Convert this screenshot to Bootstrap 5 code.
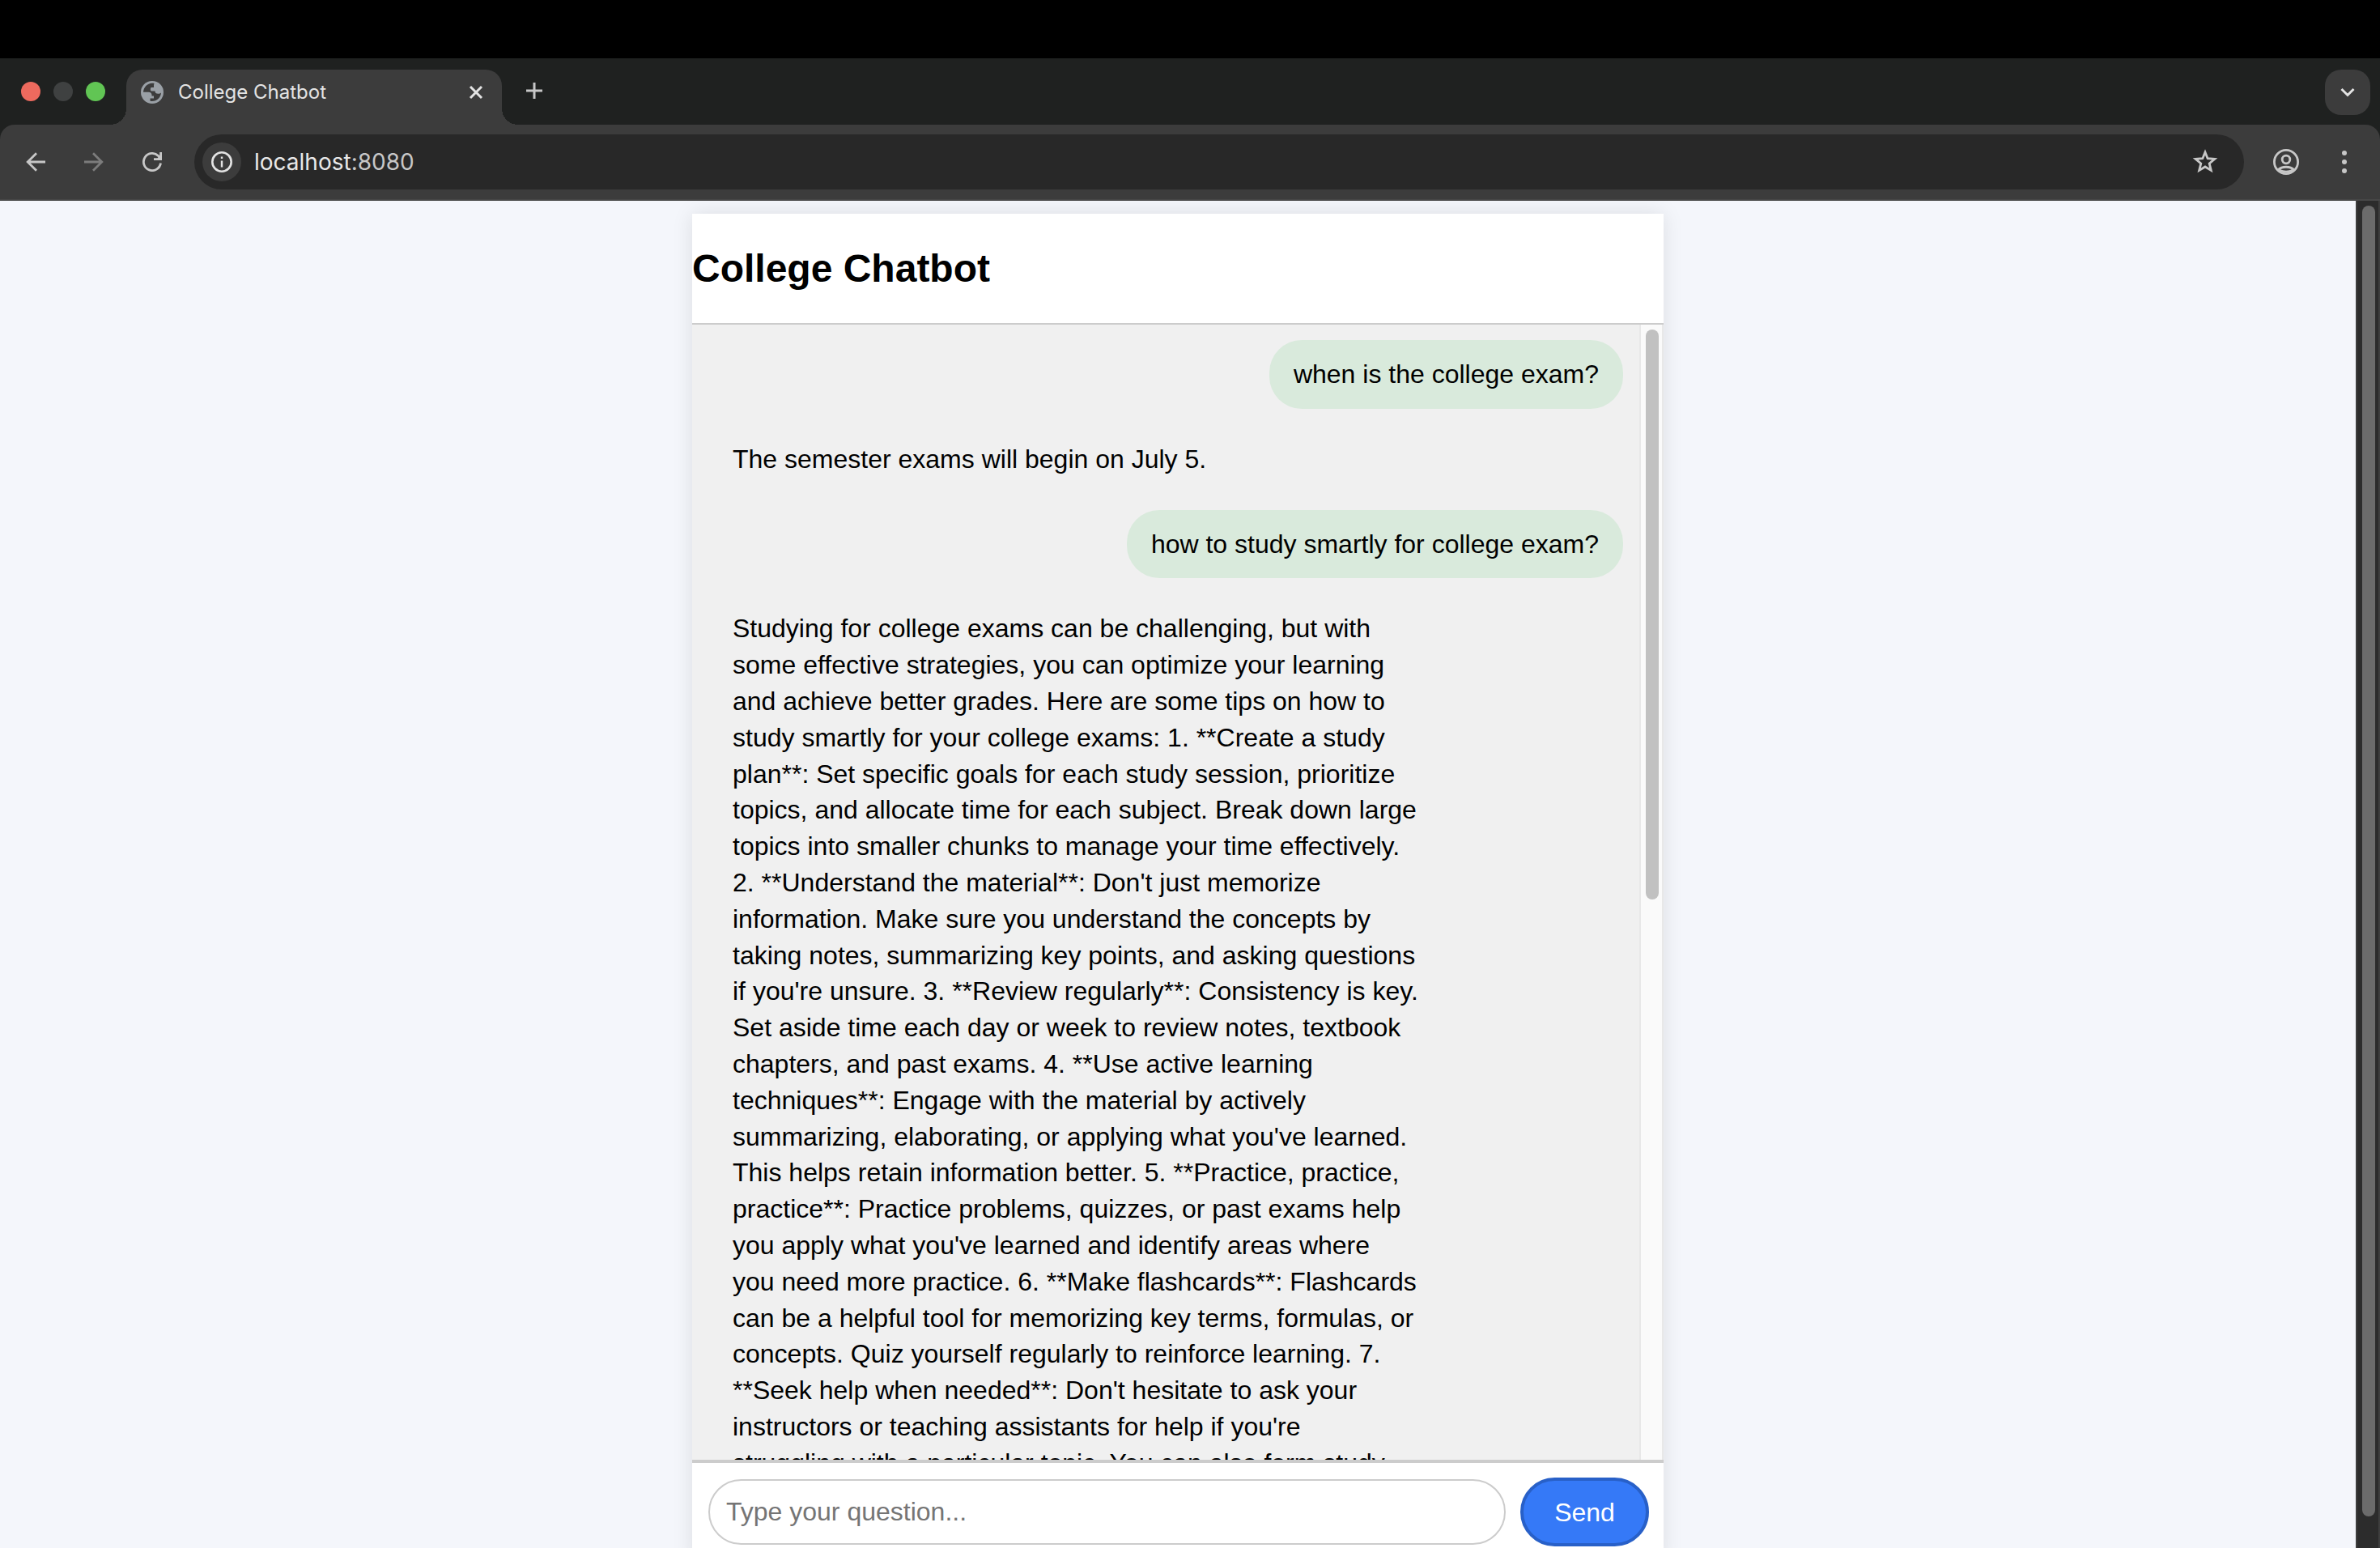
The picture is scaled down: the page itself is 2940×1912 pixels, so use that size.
<!DOCTYPE html>
<html lang="en">
<head>
<meta charset="utf-8">
<meta name="viewport" content="width=device-width, initial-scale=1">
<title>College Chatbot</title>
<link href="https://cdn.jsdelivr.net/npm/bootstrap@5.3.0/dist/css/bootstrap.min.css" rel="stylesheet">
<style>
body { font-family: "Liberation Sans", Arial, sans-serif; color: #000; background: #000; }
button { line-height: 1; }
.icon-btn { border: 0; padding: 0; background: transparent; color: #c7c7c7; display: flex; align-items: center; justify-content: center; flex: none; }
.icon-btn svg, .site-tab svg { display: block; }

/* browser chrome */
.menu-strip { height: 72px; background: #000; }
.tab-strip { height: 82px; background: #1f2120; padding: 14px 12px 0 26px; }
.lights { gap: 16px; height: 54px; width: 130px; }
.light { width: 24px; height: 24px; border-radius: 50%; }
.light-close { background: #ed6a5e; }
.light-min { background: #3f4141; }
.light-max { background: #61c554; }
.site-tab { width: 464px; height: 68px; background: #3c3c3c; border-radius: 20px 20px 0 0; padding: 0 22px 12px 18px; font: 24px/28px Inter, Roboto, sans-serif; color: #e3e3e3; }
.site-tab::before, .site-tab::after { content: ""; position: absolute; bottom: 0; width: 20px; height: 20px; }
.site-tab::before { left: -20px; background: radial-gradient(circle at 0 0, transparent 20px, #3c3c3c 20px); }
.site-tab::after { right: -20px; background: radial-gradient(circle at 100% 0, transparent 20px, #3c3c3c 20px); }
.tab-name { margin-left: 18px; }
.tab-search { width: 56px; height: 56px; border-radius: 20px; background: #3c3c3c; color: #e3e3e3; }
.new-tab { width: 40px; height: 52px; margin-left: 20px; }
.toolbar-wrap { background: #1f2120; }
.toolbar { height: 94px; background: #3c3c3c; border-bottom: 2px solid #474747; border-radius: 18px 18px 0 0; padding: 0 24px; }
.nav-btn { width: 40px; height: 40px; }
.nav-group { gap: 32px; width: 216px; }
.tool-group { gap: 32px; }
.omnibox { height: 68px; border-radius: 34px; background: #282828; padding: 0 32px 0 10px; margin-right: 32px; }
.site-info { width: 48px; height: 48px; border-radius: 50%; background: #3c3c3c; color: #e3e3e3; }
.address { font: 28px/36px Inter, Roboto, sans-serif; color: #c7c7c7; margin-left: 16px; }
.address b { font-weight: 400; color: #e8e8e8; }

/* page */
.viewport { background: #f4f6fb; min-height: 0; }
.page-area { padding-top: 16px; }
.bar { width: 30px; padding: 6px 4px; border: solid; border-width: 0 2px; flex: none; }
.bar-page { background: #2c2c2c; border-color: #3e3e3e; }
.bar-chat { background: #fafafa; border-color: #e8e8e8; }
.thumb { width: 16px; border-radius: 8px; margin-left: 2px; }
.bar-page .thumb { background: #6b6b6b; height: 98%; }
.bar-chat .thumb { background: #c1c1c1; height: 704px; }
.app { width: 100%; max-width: 1200px; height: calc(100vh - 248px); background: #fff; box-shadow: 0 0 24px rgba(0,0,0,.1); flex: none; }
.app h2 { font-size: 48px; line-height: 55px; font-weight: 700; padding: 40px 0; margin: 0; }
.chat { background: #f0f0f0; border: solid #ccc; border-width: 2px 0; min-height: 0; }
.messages { padding: 19px 20px; gap: 20px; font-size: 32px; line-height: 1.4; }
.msg { box-sizing: content-box; max-width: 75%; padding: 20px 30px; border-radius: 40px; flex: none; }
.msg-user { align-self: flex-end; background: #d9eadc; }
.msg-bot { align-self: flex-start; }
.ask { padding: 18px; border-top: 2px solid #ccc; gap: 18px; }
.ask input { height: 81px; border: 2px solid #ccc; border-radius: 41px; padding: 0 20px; font-size: 32px; color: #000; background: #fff; margin-left: 2px; }
.ask input::placeholder { color: #757575; opacity: 1; }
.send { width: 159px; height: 85px; border: 4px solid #2860c8; border-radius: 43px; background: #3579f7; color: #fff; font-size: 32px; }
</style>
<script src="https://cdn.jsdelivr.net/npm/bootstrap@5.3.0/dist/js/bootstrap.bundle.min.js"></script>
</head>
<body class="vh-100 overflow-hidden d-flex flex-column">
<div class="menu-strip flex-shrink-0"></div>
<header class="flex-shrink-0">
  <div class="tab-strip d-flex align-items-start">
    <div class="lights d-flex align-items-center flex-shrink-0">
      <span class="light light-close"></span><span class="light light-min"></span><span class="light light-max"></span>
    </div>
    <div class="site-tab position-relative d-flex align-items-center flex-shrink-0">
      <svg width="28" height="28" viewBox="0 0 28 28"><circle cx="14" cy="14" r="14" fill="#9aa0a6"/><path d="M16.500 3C9 1.500 3.500 7 3 13.800h6.500c2.500 0 4 1.500 4 3.700v1h2.500v3h-4.500v3.200c7 1.300 13-3.200 13.500-10.200-1 1-2 1.300-3.500 1.300-3 0-4-1.300-4-3.300h-4.500c-1.500 0-1.500-4.500 0-4.500h3V5z" fill="#3c3c3c"/></svg>
      <span class="tab-name">College Chatbot</span>
      <button class="icon-btn ms-auto" type="button" aria-label="Close tab"><svg width="20" height="20" viewBox="0 0 20 20" stroke="#e3e3e3" stroke-width="3"><path d="M3 3l14 14M17 3L3 17"/></svg></button>
    </div>
    <button class="icon-btn new-tab" type="button" aria-label="New tab"><svg width="20" height="20" viewBox="0 0 20 20" stroke="currentColor" stroke-width="3"><path d="M10 0v20M0 10h20"/></svg></button>
    <button class="icon-btn tab-search ms-auto" type="button" aria-label="Search tabs"><svg width="18" height="12" viewBox="0 0 18 12" fill="none" stroke="currentColor" stroke-width="3"><path d="M1.500 2L9 9.500 16.500 2"/></svg></button>
  </div>
  <div class="toolbar-wrap">
    <div class="toolbar d-flex align-items-center">
      <div class="nav-group d-flex flex-shrink-0">
        <button class="icon-btn nav-btn" type="button" aria-label="Back"><svg width="24" height="24" viewBox="0 0 24 24" fill="none" stroke="currentColor" stroke-width="2.800"><path d="M24 12H2.500M13 1.200L2.200 12 13 22.800"/></svg></button>
        <button class="icon-btn nav-btn" type="button" aria-label="Forward"><svg width="24" height="24" viewBox="0 0 24 24" fill="none" stroke="#7c7c7c" stroke-width="2.800"><path d="M0 12h21.500M11 1.200L21.800 12 11 22.800"/></svg></button>
        <button class="icon-btn nav-btn" type="button" aria-label="Reload"><svg width="24" height="24" viewBox="0 0 24 24" fill="none" stroke="currentColor" stroke-width="2.800"><path d="M22.500 13.500A10.600 10.600 0 1 1 19.500 4.500L21 6"/><path d="M24 0v10H14V7.200h4.500L21.200 4.500V0z" fill="currentColor" stroke="none"/></svg></button>
      </div>
      <div class="omnibox d-flex align-items-center flex-grow-1">
        <button class="icon-btn site-info" type="button" aria-label="Site information"><svg width="26" height="26" viewBox="0 0 26 26" fill="none" stroke="currentColor"><circle cx="13" cy="13" r="11.700" stroke-width="2.600"/><path d="M13 11.500v8M13 6.500v2.500" stroke-width="2.400"/></svg></button>
        <span class="address"><b>localhost</b>:8080</span>
        <button class="icon-btn ms-auto" type="button" aria-label="Bookmark this page"><svg width="32" height="32" viewBox="0 0 32 32" fill="none" stroke="currentColor" stroke-width="2.800"><path d="M16 4l3.100 7.700 8.700.600-6.600 5.600 2.100 8.500L16 22l-7.300 4.400 2.100-8.500-6.600-5.600 8.700-.600z"/></svg></button>
      </div>
      <div class="tool-group d-flex flex-shrink-0">
        <button class="icon-btn nav-btn" type="button" aria-label="Profile"><svg width="32" height="32" viewBox="0 0 32 32" fill="none" stroke="currentColor" stroke-width="2.800"><circle cx="16" cy="16" r="14.600"/><circle cx="16" cy="13" r="4.800"/><path d="M6 26c5-5 15-5 20 0M8 26.500c5 2 11 2 16 0"/></svg></button>
        <button class="icon-btn nav-btn" type="button" aria-label="Menu"><svg width="6" height="28" viewBox="0 0 6 28" fill="currentColor"><circle cx="3" cy="3" r="3"/><circle cx="3" cy="14" r="3"/><circle cx="3" cy="25" r="3"/></svg></button>
      </div>
    </div>
  </div>
</header>
<div class="viewport d-flex flex-grow-1">
  <main class="page-area d-flex flex-column align-items-center flex-grow-1 overflow-hidden">
    <section class="app d-flex flex-column">
      <h2>College Chatbot</h2>
      <div class="chat d-flex flex-grow-1">
        <div class="messages d-flex flex-column flex-grow-1 overflow-hidden">
          <div class="msg msg-user">when is the college exam?</div>
          <div class="msg msg-bot">The semester exams will begin on July 5.</div>
          <div class="msg msg-user">how to study smartly for college exam?</div>
          <div class="msg msg-bot">Studying for college exams can be challenging, but with some effective strategies, you can optimize your learning and achieve better grades. Here are some tips on how to study smartly for your college exams: 1. **Create a study plan**: Set specific goals for each study session, prioritize topics, and allocate time for each subject. Break down large topics into smaller chunks to manage your time effectively. 2. **Understand the material**: Don't just memorize information. Make sure you understand the concepts by taking notes, summarizing key points, and asking questions if you're unsure. 3. **Review regularly**: Consistency is key. Set aside time each day or week to review notes, textbook chapters, and past exams. 4. **Use active learning techniques**: Engage with the material by actively summarizing, elaborating, or applying what you've learned. This helps retain information better. 5. **Practice, practice, practice**: Practice problems, quizzes, or past exams help you apply what you've learned and identify areas where you need more practice. 6. **Make flashcards**: Flashcards can be a helpful tool for memorizing key terms, formulas, or concepts. Quiz yourself regularly to reinforce learning. 7. **Seek help when needed**: Don't hesitate to ask your instructors or teaching assistants for help if you're struggling with a particular topic. You can also form study</div>
        </div>
        <div class="bar bar-chat"><div class="thumb"></div></div>
      </div>
      <form class="ask d-flex align-items-center flex-shrink-0">
        <input class="flex-grow-1" type="text" placeholder="Type your question..." aria-label="Your question">
        <button class="send" type="button">Send</button>
      </form>
    </section>
  </main>
  <div class="bar bar-page"><div class="thumb"></div></div>
</div>
</body>
</html>
